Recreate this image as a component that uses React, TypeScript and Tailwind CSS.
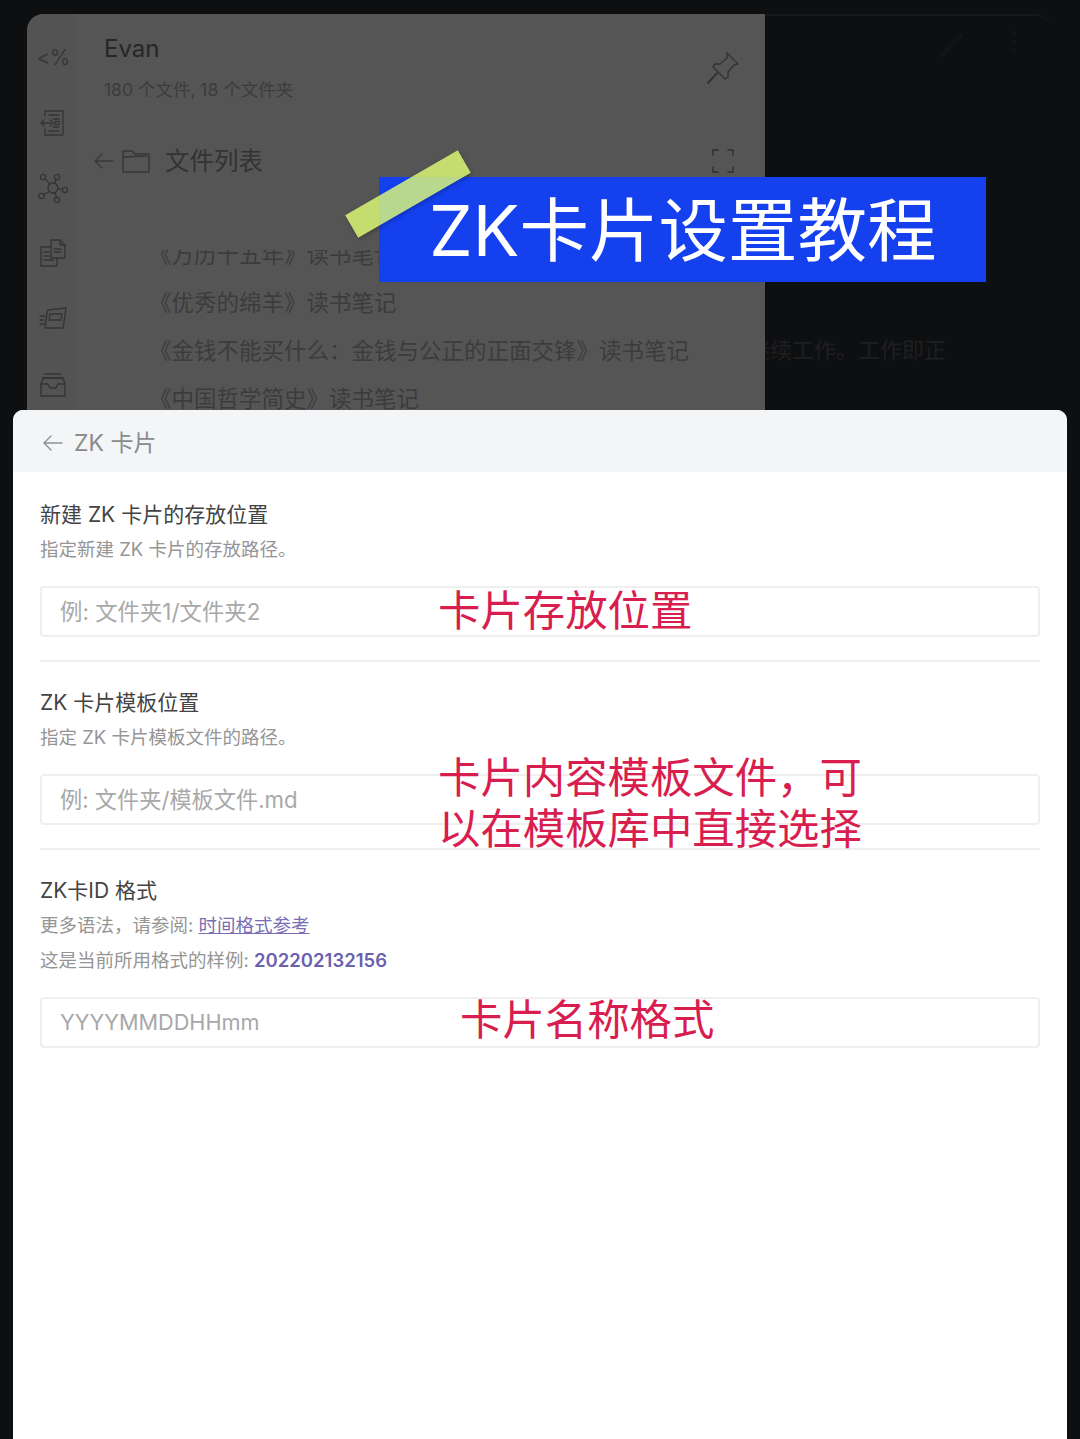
const FONT = "font-['Inter','Noto_Sans_CJK_SC',sans-serif]";

function Stroke({ className, children, viewBox = "0 0 28 28" }: { className: string; children: React.ReactNode; viewBox?: string }) {
  return (
    <svg className={className} viewBox={viewBox} fill="none" stroke="currentColor" strokeWidth="1.4" strokeLinecap="round" strokeLinejoin="round">
      {children}
    </svg>
  );
}

function Sidebar() {
  return (
    <div className="w-[48px] shrink-0 pl-[4px] flex flex-col items-center bg-[#535353] text-[#353535]">
      <div className="h-[50px] mt-[27px] flex items-start text-[21px] leading-[34px] tracking-[-0.5px] text-[#383838]">&lt;%</div>
      <Stroke className="w-[28px] h-[28px] mt-[18px]">
        <path d="M6 7V2h18v24H6v-6" />
        <path d="M10 6h10M14 10h6M14 18h6M10 22h10" />
        <path d="M2 14h9M5 11l-3 3 3 3M11 11l3 3-3 3" />
        <rect x="16" y="12.5" width="4" height="3" />
      </Stroke>
      <Stroke className="w-[30px] h-[30px] mt-[36px]" viewBox="0 0 30 30">
        <circle cx="15" cy="15" r="5" />
        <circle cx="5" cy="4" r="2.6" />
        <circle cx="19" cy="4" r="2.6" />
        <circle cx="3.5" cy="23" r="2.6" />
        <circle cx="27" cy="17" r="2.6" />
        <circle cx="19" cy="27" r="2.6" />
        <path d="M7 6l5 5M18 7l-1.500 3.500M6 21.500l5.500-3M20 15.500l4.500 1M17 20l1.500 4.500" />
      </Stroke>
      <Stroke className="w-[28px] h-[28px] mt-[36px]">
        <path d="M12 8H2v19h16v-8" />
        <path d="M12 8v11h14V6l-5-5h-9v7" />
        <path d="M21 1v5h5M15 10h7M15 13h7M5 13h5M5 17h5M5 21h9" />
      </Stroke>
      <Stroke className="w-[28px] h-[24px] mt-[39px]" viewBox="0 0 28 24">
        <path d="M8 7l1-3 18-2-3 20H6z" />
        <path d="M11 8h12l-1 6H10z" />
        <path d="M1 10h5M1 14h4M1 18h4" />
      </Stroke>
      <Stroke className="w-[26px] h-[26px] mt-[41px]" viewBox="0 0 26 26">
        <path d="M5 3h16M3 7h20" />
        <path d="M1 13l2-6h20l2 6v12H1z" />
        <path d="M1 13h7l2 4h6l2-4h7" />
      </Stroke>
    </div>
  );
}

const files = ["《万历十五年》读书笔记", "《优秀的绵羊》读书笔记", "《金钱不能买什么：金钱与公正的正面交锋》读书笔记", "《中国哲学简史》读书笔记"];

function FilePanel() {
  return (
    <div className="w-[690px] shrink-0 bg-[#555555]">
      <div className="pl-[29px] pr-[25px] pt-[17px] flex justify-between items-start">
        <div>
          <div className="text-[24px] leading-[36px] text-[#262626]">Evan</div>
          <div className="mt-[10px] text-[17.5px] leading-[26px] text-[#3c3c3c]">180 个文件, 18 个文件夹</div>
        </div>
        <Stroke className="w-[34px] h-[34px] mt-[20px] text-[#333333]" viewBox="0 0 34 34">
          <path d="M21 2l11 11-4 1-6 7 0 5-3 2-6-6-6-6 2-3 5 0 7-6z" />
          <path d="M11 22L2 32" strokeWidth="2" />
        </Stroke>
      </div>
      <div className="pl-[18px] pr-[31px] mt-[40px] h-[36px] flex items-center justify-between">
        <div className="flex items-center">
          <Stroke className="w-[22px] h-[22px] text-[#3a3a3a]" viewBox="0 0 22 22">
            <path d="M20 11H2M9 4l-7 7 7 7" />
          </Stroke>
          <Stroke className="w-[28px] h-[26px] ml-[7px] text-[#363636]" viewBox="0 0 28 26">
            <path d="M1 24V3h9l3 3h14v18z" />
            <path d="M1 9l24-1" />
          </Stroke>
          <span className="ml-[15px] text-[24.500px] leading-[36px] text-[#333333]">文件列表</span>
        </div>
        <Stroke className="w-[22px] h-[24px] text-[#2e2e2e]" viewBox="0 0 22 24">
          <path d="M1 6V1h5M16 1h5v5M21 18v5h-5M6 23H1v-5" />
        </Stroke>
      </div>
      <div className="h-[71px]" />
      <div className="overflow-hidden h-[160px] pl-[74px]">
        <div className="-mt-[19px]">
          {files.map((f) => (
            <div key={f} className="h-[48px] flex items-center whitespace-nowrap text-[22.500px] leading-[32px] text-[#3c3c3c]">{f}</div>
          ))}
        </div>
      </div>
    </div>
  );
}

function DetailPanel() {
  return (
    <div className="flex-1 min-w-0 bg-[#0e0f10] border-t-2 border-[#17181a] rounded-tr-[16px] overflow-hidden">
      <div className="flex justify-end gap-[47px] pr-[35px] pt-[14px] h-[318px] text-[#151617]">
        <Stroke className="w-[26px] h-[28px]" viewBox="0 0 26 28">
          <path d="M2 26L22 4l2 2L5 26z" />
        </Stroke>
        <Stroke className="w-[6px] h-[24px]" viewBox="0 0 6 24">
          <path d="M3 2v1M3 11v1M3 20v1" strokeWidth="3" />
        </Stroke>
      </div>
      <div className="whitespace-nowrap -ml-[17px] text-[22px] leading-[32px] text-[#1e1f20]">继续工作。工作即正</div>
    </div>
  );
}

function Field({ title, children, placeholder, divider, placeholderClass }: { title: string; children: React.ReactNode; placeholder: string; divider?: boolean; placeholderClass: string }) {
  return (
    <div className={divider ? "pb-[23px] pt-[26px] border-b-2 border-[#eeefef]" : "pt-[26px]"}>
      <div className="text-[21px] leading-[30px] text-[#434343]">{title}</div>
      <div className="mt-[2px] text-[18.500px] leading-[34px] text-[#959595]">{children}</div>
      <div className={`mt-[20px] h-[51px] px-[18px] flex items-center rounded-[4px] border-2 border-[#efefef] bg-white text-[#a8a8a8] ${placeholderClass}`}>{placeholder}</div>
    </div>
  );
}

function Modal() {
  return (
    <div className="absolute left-[13px] top-[410px] w-[1054px] h-[1029px] rounded-t-[10px] bg-white overflow-hidden">
      <div className="h-[62px] pl-[30px] pt-[3px] flex items-center gap-[11px] bg-[#f3f5f6] text-[#8a8b8c]">
        <Stroke className="w-[20px] h-[20px] text-[#8f9091]" viewBox="0 0 20 20">
          <path d="M19 10H1M8 3l-7 7 7 7" />
        </Stroke>
        <span className="text-[23px] leading-[34px]">ZK 卡片</span>
      </div>
      <div className="px-[27px] pt-[2px]">
        <Field title="新建 ZK 卡片的存放位置" placeholder="例: 文件夹1/文件夹2" placeholderClass="text-[22.400px]" divider>指定新建 ZK 卡片的存放路径。</Field>
        <Field title="ZK 卡片模板位置" placeholder="例: 文件夹/模板文件.md" placeholderClass="text-[22.200px]" divider>指定 ZK 卡片模板文件的路径。</Field>
        <Field title="ZK卡ID 格式" placeholder="YYYYMMDDHHmm" placeholderClass="text-[21.700px]">
          <div>更多语法，请参阅: <span className="underline text-[#7a6db5]">时间格式参考</span></div>
          <div className="mt-[1px]">这是当前所用格式的样例: <span className="font-semibold text-[#6b5fae]">202202132156</span></div>
        </Field>
      </div>
    </div>
  );
}

export default function App() {
  return (
    <div className={`relative h-[1439px] w-[1080px] overflow-hidden bg-[#0e0f10] ${FONT}`}>
      <div className="ml-[27px] mt-[14px] w-[1025px] flex rounded-t-[16px] overflow-hidden">
        <Sidebar />
        <FilePanel />
        <DetailPanel />
      </div>
      <Modal />
      <div className="absolute left-[379px] top-[177px] w-[607px] h-[105px] pl-[50px] pt-[4px] flex items-center bg-[#1440ee] text-white text-[69.500px] leading-[101px] whitespace-nowrap">ZK卡片设置教程</div>
      <div className="absolute left-[343px] top-[181px] w-[130px] h-[26px] -rotate-[30deg] bg-[#e1fe74]/80 shadow-[0_2px_4px_rgba(0,0,0,0.25)]" />
      <div className="absolute left-[438px] top-[586px] text-[42.400px] leading-[50px] text-[#d81e4f] whitespace-nowrap">卡片存放位置</div>
      <div className="absolute left-[438px] top-[752px] w-[440px] text-[42.400px] leading-[51px] text-[#d81e4f]">卡片内容模板文件，可<br />以在模板库中直接选择</div>
      <div className="absolute left-[460px] top-[995px] text-[42.400px] leading-[50px] text-[#d81e4f] whitespace-nowrap">卡片名称格式</div>
    </div>
  );
}
